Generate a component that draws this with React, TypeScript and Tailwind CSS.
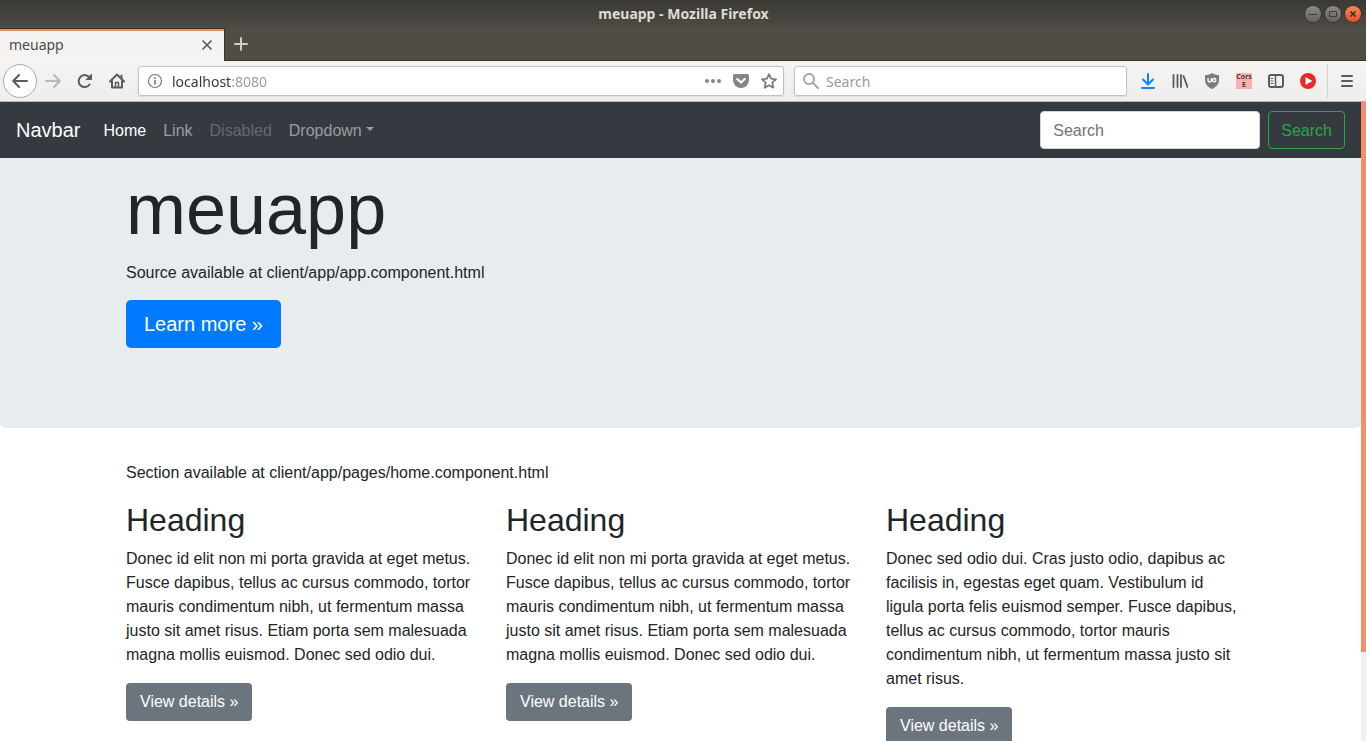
import type { ReactNode } from "react";

function IconButton({ label, children, className = "w-8" }: { label: string; children: ReactNode; className?: string }) {
  return (
    <button type="button" aria-label={label} className={`flex h-7 shrink-0 items-center justify-center ${className}`}>
      {children}
    </button>
  );
}

function Stroke({ children, className = "text-[#5b5b5a]", width = 2 }: { children: ReactNode; className?: string; width?: number }) {
  return (
    <svg viewBox="0 0 16 16" className={`size-4 ${className}`} fill="none" stroke="currentColor" strokeWidth={width} strokeLinecap="round" strokeLinejoin="round" aria-hidden="true">
      {children}
    </svg>
  );
}

function TitleBar() {
  return (
    <header className="grid h-7 shrink-0 grid-cols-[1fr_auto_1fr] items-center bg-linear-to-b from-[#3a3934] to-[#4e4b44] pr-[5px] pl-1.5">
      <span />
      <h1 className="text-[14px] leading-5 font-bold text-[#dfdbd2]">meuapp - Mozilla Firefox</h1>
      <div className="flex justify-end gap-1">
        <button type="button" aria-label="Minimize" className="flex size-4 items-center justify-center rounded-full bg-linear-to-b from-[#8b8a84] to-[#64635e] ring-1 ring-[#35342f]">
          <svg viewBox="0 0 16 16" className="size-4" fill="none" stroke="#3c3b37" aria-hidden="true"><path d="M4 8.500h8" /></svg>
        </button>
        <button type="button" aria-label="Maximize" className="flex size-4 items-center justify-center rounded-full bg-linear-to-b from-[#8b8a84] to-[#64635e] ring-1 ring-[#35342f]">
          <svg viewBox="0 0 16 16" className="size-4" fill="none" stroke="#3c3b37" aria-hidden="true"><path d="M4.500 5.500h7v5h-7z" /></svg>
        </button>
        <button type="button" aria-label="Close window" className="flex size-4 items-center justify-center rounded-full bg-linear-to-b from-[#f58461] to-[#e2511b] ring-1 ring-[#35342f]">
          <svg viewBox="0 0 16 16" className="size-4" fill="none" stroke="#3c2a1c" strokeWidth="1.500" aria-hidden="true"><path d="m5.500 5.500 5 5m0-5-5 5" /></svg>
        </button>
      </div>
    </header>
  );
}

function TabStrip() {
  return (
    <div className="flex h-[33px] shrink-0 bg-[#504d45]">
      <div className="flex w-[225px] items-center justify-between border-t border-r border-[#35342f] bg-[#f4f3f1] pr-[9px] pl-[9px] shadow-[inset_0_2px_0_#f5875c]">
        <span className="text-[14px] leading-5 text-[#4c4c4c]">meuapp</span>
        <button type="button" aria-label="Close tab">
          <Stroke width={1.7}><path d="m4 4 8 8m0-8-8 8" /></Stroke>
        </button>
      </div>
      <div className="flex grow items-center border-b border-[#35342f]">
        <button type="button" aria-label="New tab" className="flex w-8 justify-center">
          <Stroke className="text-[#cfcdc8]"><path d="M8 2v12M2 8h12" /></Stroke>
        </button>
      </div>
    </div>
  );
}

function Toolbar() {
  return (
    <div className="flex h-[41px] shrink-0 items-center border-b border-[#b8b5b1] bg-linear-to-b from-[#f5f4f2] to-[#f0eeec] px-[3px]">
      <button type="button" aria-label="Back" className="flex size-[34px] shrink-0 items-center justify-center rounded-full border border-[#a9a9a8] bg-[#fdfdfd]">
        <Stroke><path d="M15 8H1.500M7 2 1.200 8 7 14" /></Stroke>
      </button>
      <IconButton label="Forward">
        <Stroke className="text-[#b9b8b6]"><path d="M1 8h13.500M9 2l5.800 6L9 14" /></Stroke>
      </IconButton>
      <IconButton label="Reload">
        <Stroke><path d="M12.600 11.500a6 6 0 1 1 .2-6.500" /><path d="M14.500 1.500v5h-5z" fill="currentColor" strokeWidth="1" /></Stroke>
      </IconButton>
      <IconButton label="Home">
        <Stroke><path d="M1 8.500 8 1.500l7 7M3 8v6.500h10V8" /><path d="M12.500 2.500v3" /><path d="M6.500 14V9.500h3V14" strokeWidth="1.500" /></Stroke>
      </IconButton>

      <div className="ml-[5px] flex h-[30px] grow items-center rounded-[3px] border border-[#c4c1bd] bg-white shadow-[0_1px_2px_rgba(0,0,0,0.08)]">
        <IconButton label="Site information">
          <svg viewBox="0 0 16 16" className="size-4" aria-hidden="true">
            <circle cx="8" cy="8" r="6.500" fill="none" stroke="#777" strokeWidth="1.200" />
            <path d="M7.200 7h1.600v4.500H7.200zM7.200 4.300h1.600v1.600H7.200z" fill="#777" />
          </svg>
        </IconButton>
        <input
          aria-label="Address"
          defaultValue="localhost:8080"
          className="min-w-0 grow bg-[linear-gradient(90deg,#333_60px,#999_60px)] bg-clip-text pt-0.5 pl-px text-[14px] leading-5 text-transparent outline-none"
        />
        <IconButton label="Page actions" className="w-7">
          <svg viewBox="0 0 16 16" className="size-4" fill="#858584" aria-hidden="true"><circle cx="2" cy="8" r="2" /><circle cx="8" cy="8" r="2" /><circle cx="14" cy="8" r="2" /></svg>
        </IconButton>
        <IconButton label="Save to Pocket" className="w-7">
          <svg viewBox="0 0 16 16" className="size-4" aria-hidden="true">
            <path d="M1.800 1h12.400A1.800 1.800 0 0 1 16 2.800V7a8 8 0 0 1-16 0V2.800A1.800 1.800 0 0 1 1.800 1Z" fill="#858584" />
            <path d="m4.200 6 3.800 3.600L11.800 6" fill="none" stroke="#fff" strokeWidth="2" strokeLinecap="round" strokeLinejoin="round" />
          </svg>
        </IconButton>
        <IconButton label="Bookmark this page" className="w-7">
          <Stroke className="text-[#7d7d7c]" width={1.8}><path d="m8 1.200 2 4.500 5 .6-3.700 3.400 1 5L8 12.200l-4.300 2.500 1-5L1 6.300l5-.6z" /></Stroke>
        </IconButton>
      </div>

      <label className="ml-2.5 flex h-[30px] w-[333px] items-center gap-[7px] rounded-[3px] border border-[#c4c1bd] bg-white pl-2 shadow-[0_1px_2px_rgba(0,0,0,0.08)]">
        <Stroke className="text-[#a5a5a4]"><circle cx="6" cy="6" r="5" /><path d="m10 10 5 5" /></Stroke>
        <input aria-label="Web search" placeholder="Search" className="min-w-0 grow pt-0.5 text-[14px] leading-5 outline-none placeholder:text-[#999]" />
      </label>

      <div className="ml-[5px] flex items-center">
        <IconButton label="Downloads">
          <Stroke className="text-[#0a84ff]"><path d="M8 1v10M3 6.500 8 11.500l5-5M2 15h12" /></Stroke>
        </IconButton>
        <IconButton label="Library">
          <Stroke><path d="M1.500 2v12M5.500 2v12M9 2v12M11.500 3l4 11" strokeWidth="1.800" /></Stroke>
        </IconButton>
        <IconButton label="uBlock">
          <svg viewBox="0 0 16 16" className="size-4" aria-hidden="true">
            <path d="M8 0c2 1.500 4.500 2 7 2v5c0 4-2.500 7-7 9-4.500-2-7-5-7-9V2c2.500 0 5-.5 7-2Z" fill="#7d7d7c" />
            <path d="M4 5v2.300a1.700 1.700 0 0 0 3.400 0V5" fill="none" stroke="#fff" strokeWidth="1.300" />
            <circle cx="10.200" cy="7.200" r="1.700" fill="none" stroke="#fff" strokeWidth="1.300" />
          </svg>
        </IconButton>
        <button type="button" aria-label="Cors Everywhere" className="flex size-8 items-center justify-center">
          <span className="flex size-4 flex-col items-center justify-center bg-[#f8b3b1] text-[7px] leading-[8px] font-semibold text-[#3b2525]">
            <span>Cors</span>
            <span>E</span>
          </span>
        </button>
        <IconButton label="Sidebar">
          <Stroke><rect x="1" y="2" width="14" height="12" rx="2" /><path d="M7.500 2v12" strokeWidth="1.500" /><path d="M3 5.500h2M3 8h2M3 10.500h2" strokeWidth="1" /></Stroke>
        </IconButton>
        <IconButton label="Video helper">
          <svg viewBox="0 0 16 16" className="size-4" aria-hidden="true"><circle cx="8" cy="8" r="8" fill="#e62b26" /><path d="M5.500 4v8l7-4z" fill="#fff" /></svg>
        </IconButton>
        <span className="mx-[3px] h-[34px] w-px bg-[#d3d1ce]" />
        <IconButton label="Open menu">
          <Stroke><path d="M3 3h10M3 8h10M3 13h10" /></Stroke>
        </IconButton>
      </div>
    </div>
  );
}

function Navbar() {
  return (
    <nav className="flex h-14 items-center bg-[#343a40] px-4 text-[16px] leading-6">
      <a href="#" className="mr-[15px] text-[20px] leading-[30px] text-white">Navbar</a>
      <ul className="flex grow gap-px">
        <li><a href="#" className="block px-2 pt-2.5 pb-2 text-white">Home</a></li>
        <li><a href="#" className="block px-2 pt-2.5 pb-2 text-white/50">Link</a></li>
        <li><a href="#" aria-disabled="true" className="block px-2 pt-2.5 pb-2 text-white/25">Disabled</a></li>
        <li>
          <a href="#" className="flex items-center gap-1 px-2 pt-2.5 pb-2 text-white/50">
            Dropdown
            <svg viewBox="0 0 10 5" className="mb-1 h-1 w-2" fill="currentColor" aria-hidden="true"><path d="M0 0h10L5 5z" /></svg>
          </a>
        </li>
      </ul>
      <form className="flex gap-2">
        <input aria-label="Search" placeholder="Search" className="h-[38px] w-[220px] rounded-[4px] border border-[#ced4da] bg-white px-3 pt-0.5 placeholder:text-[#6c757d]" />
        <button type="button" className="h-[38px] rounded-[4px] border border-[#28a745] px-3 pt-0.5 text-[#28a745]">Search</button>
      </form>
    </nav>
  );
}

const DONEC =
  "Donec id elit non mi porta gravida at eget metus. Fusce dapibus, tellus ac cursus commodo, tortor mauris condimentum nibh, ut fermentum massa justo sit amet risus. Etiam porta sem malesuada magna mollis euismod. Donec sed odio dui.";

const SECTIONS = [
  { id: 1, body: DONEC },
  { id: 2, body: DONEC },
  {
    id: 3,
    body: "Donec sed odio dui. Cras justo odio, dapibus ac facilisis in, egestas eget quam. Vestibulum id ligula porta felis euismod semper. Fusce dapibus, tellus ac cursus commodo, tortor mauris condimentum nibh, ut fermentum massa justo sit amet risus.",
  },
];

function Page() {
  return (
    <div className="min-w-0 grow overflow-hidden bg-white font-['Liberation_Sans',sans-serif] text-[16px] leading-6 text-[#212529]">
      <Navbar />
      <section className="rounded-b-[5px] bg-[#e9ecef] pt-2 pb-20">
        <div className="mx-auto max-w-[1139px] pr-3.5 pl-[15px]">
          <h2 className="mb-[9px] text-[72px] leading-[86px]">meuapp</h2>
          <p className="mb-[15px]">Source available at client/app/app.component.html</p>
          <a href="#" className="inline-block rounded-[5px] bg-[#007bff] px-[18px] py-[9px] align-top text-[20px] leading-[30px] text-white">Learn more »</a>
        </div>
      </section>
      <main className="mx-auto mt-[33px] max-w-[1139px] pr-3.5 pl-[15px]">
        <p className="mb-4">Section available at client/app/pages/home.component.html</p>
        <div className="grid grid-cols-3 gap-[30px]">
          {SECTIONS.map((section) => (
            <article key={section.id} className="-mr-1.5">
              <h2 className="mb-2 text-[32px] leading-[38px]">Heading</h2>
              <p className="mb-4">{section.body}</p>
              <a href="#" className="inline-block rounded-[4px] bg-[#6c757d] px-3.5 py-[7px] align-top text-white">View details »</a>
            </article>
          ))}
        </div>
      </main>
    </div>
  );
}

export default function App() {
  return (
    <div className="flex h-screen flex-col overflow-hidden font-['Noto_Sans',sans-serif]">
      <TitleBar />
      <TabStrip />
      <Toolbar />
      <div className="flex min-h-0 grow">
        <Page />
        <div className="w-[5px] shrink-0 bg-[#f0f0f0]">
          <div className="h-[86%] bg-[#f28f6a]" />
        </div>
      </div>
    </div>
  );
}
